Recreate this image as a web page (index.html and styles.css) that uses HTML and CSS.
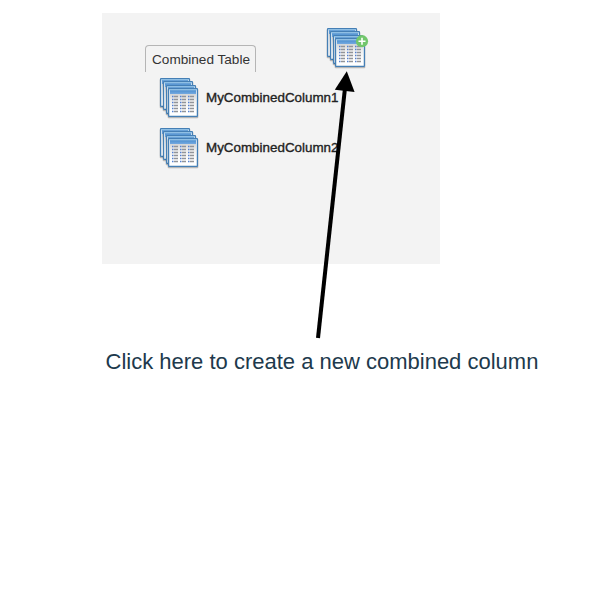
FILE: index.html
```html
<!DOCTYPE html>
<html lang="en">
<head>
<meta charset="utf-8">
<title>Combined columns</title>
<link rel="stylesheet" href="styles.css">
</head>
<body>
<svg class="defs" aria-hidden="true">
  <defs>
    <linearGradient id="bar" x1="0" y1="0" x2="0" y2="1">
      <stop offset="0" stop-color="#4c8fcf"/>
      <stop offset="1" stop-color="#74a9e0"/>
    </linearGradient>
    <linearGradient id="sheet" x1="0" y1="0" x2="0" y2="1">
      <stop offset="0" stop-color="#d4d5d6"/>
      <stop offset="0.3" stop-color="#eeeeee"/>
      <stop offset="0.8" stop-color="#ffffff"/>
    </linearGradient>
    <g id="window">
      <rect x="-0.3" y="1" width="30.6" height="29.2" rx="1" fill="#000" opacity="0.25"/>
      <rect x="0.6" y="0.6" width="28.800" height="27.800" rx="0.5" fill="#fff" stroke="#457fb5" stroke-width="1.3"/>
      <rect x="1.2" y="1" width="27.6" height="1.4" fill="#8fbfe4"/>
      <rect x="2" y="2.2" width="26" height="3.8" fill="url(#bar)"/>
      <rect x="2" y="6" width="26" height="21" fill="url(#sheet)"/>
    </g>
    <g id="row">
      <path d="M0 0h1.500M8 0h1.500M16 0h1.500" stroke="#5580d0"/>
      <path d="M2 0h4M10 0h4M18 0h4" stroke="#929498"/>
    </g>
    <g id="tables">
      <use href="#window"/>
      <use href="#window" x="3" y="3"/>
      <use href="#window" x="6" y="7"/>
      <use href="#window" x="8" y="10"/>
      <g stroke-width="1.3">
        <use href="#row" x="12" y="18.5"/>
        <use href="#row" x="12" y="21.5"/>
        <use href="#row" x="12" y="24.5"/>
        <use href="#row" x="12" y="27.5"/>
        <use href="#row" x="12" y="30.5"/>
        <use href="#row" x="12" y="33.5"/>
      </g>
    </g>
  </defs>
</svg>
<main class="page">
  <section class="panel">
    <div class="left">
      <div class="tab">Combined Table</div>
      <ul class="columns">
        <li class="column">
          <svg class="icon" viewBox="0 0 42 42"><use href="#tables"/></svg>
          <span class="name">MyCombinedColumn1</span>
        </li>
        <li class="column">
          <svg class="icon" viewBox="0 0 42 42"><use href="#tables"/></svg>
          <span class="name">MyCombinedColumn2</span>
        </li>
      </ul>
    </div>
    <svg class="icon add" viewBox="0 0 42 42" role="img" aria-label="New combined column">
      <use href="#tables"/>
      <circle cx="35" cy="13.2" r="6.100" fill="#72c66c"/>
      <path d="M35 9.700v7M31.500 13.200h7" stroke="#fff" stroke-width="1.6"/>
    </svg>
  </section>
  <p class="caption">Click here to create a new combined column</p>
  <svg class="arrow" viewBox="0 0 50 280" aria-hidden="true">
    <path d="M18 268L45 18" stroke="#000" stroke-width="4"/>
    <path d="M46.800 1.200L34.800 19.800L54.600 22Z" fill="#000"/>
  </svg>
</main>
</body>
</html>
```

FILE: styles.css
```css
* {
  box-sizing: border-box;
}

body {
  margin: 0;
  background: #fff;
  font-family: "Liberation Sans", Arial, sans-serif;
}

.defs {
  position: absolute;
  width: 0;
  height: 0;
}

.page {
  position: relative;
  width: 600px;
  height: 600px;
  padding: 13px 0 0 102px;
}

.panel {
  display: flex;
  width: 338px;
  height: 251px;
  padding: 15px 0 0 43px;
  background: #f3f3f3;
}

.left {
  width: 182px;
  padding-top: 17px;
}

.tab {
  width: 111px;
  height: 27px;
  padding-left: 6px;
  border: 1px solid #b5b5b5;
  border-bottom: 0;
  border-radius: 4px 4px 0 0;
  color: #333;
  font-size: 13.6px;
  line-height: 27px;
  white-space: nowrap;
}

.columns {
  display: flex;
  flex-direction: column;
  gap: 8px;
  margin: 6px 0 0;
  padding: 0 0 0 15px;
  list-style: none;
}

.column {
  display: flex;
  gap: 4px;
  height: 42px;
}

.icon {
  flex: none;
  width: 42px;
  height: 42px;
  overflow: visible;
}

.name {
  color: #222;
  font-size: 13.4px;
  line-height: 39px;
  -webkit-text-stroke: 0.35px #222;
}

.caption {
  margin: 85px 0 0 3.5px;
  color: #20394c;
  font-size: 22px;
  line-height: 26px;
  white-space: nowrap;
}

.arrow {
  position: absolute;
  left: 300px;
  top: 70px;
  width: 50px;
  height: 280px;
  overflow: visible;
}
```
